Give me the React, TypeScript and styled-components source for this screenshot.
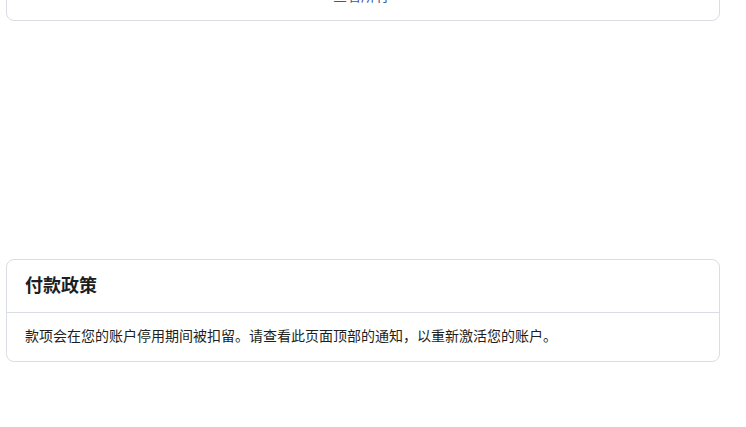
import * as React from "react";
import styled, { createGlobalStyle } from "styled-components";

const GlobalStyle = createGlobalStyle`
  html, body {
    margin: 0;
    padding: 0;
    background: #ffffff;
    overflow: hidden;
  }
  body {
    font-family: "Liberation Sans", "Noto Sans CJK SC", sans-serif;
    color: #1c1e21;
  }
`;

export default function App() {
  return (
    <Page>
      <GlobalStyle />
      <TopCard>
        <MoreLink href="#">查看所有</MoreLink>
      </TopCard>
      <Card>
        <CardHeader>
          <Title>付款政策</Title>
        </CardHeader>
        <CardBody>
          款项会在您的账户停用期间被扣留。请查看此页面顶部的通知，以重新激活您的账户。
        </CardBody>
      </Card>
    </Page>
  );
}

const Page = styled.div`
  width: 714px;
  padding: 0 26px 0 6px;
  display: flex;
  flex-direction: column;
  gap: 238px;
`;

const Card = styled.div`
  border: 1px solid #dadde1;
  border-radius: 8px;
  background: #ffffff;
`;

const TopCard = styled(Card)`
  margin-top: -30px;
  border-top-left-radius: 0;
  border-top-right-radius: 0;
  padding: 16px 0 15px;
  display: flex;
  justify-content: center;
`;

const MoreLink = styled.a`
  font-size: 14px;
  line-height: 18px;
  color: #385898;
  text-decoration: none;
  margin-left: -4px;
`;

const CardHeader = styled.div`
  height: 52px;
  padding: 0 18px;
  display: flex;
  align-items: center;
  border-bottom: 1px solid #dadde1;
`;

const Title = styled.div`
  font-size: 18px;
  font-weight: 700;
  line-height: 24px;
`;

const CardBody = styled.div`
  padding: 14px 18px 15px;
  font-size: 14px;
  line-height: 19px;
`;
